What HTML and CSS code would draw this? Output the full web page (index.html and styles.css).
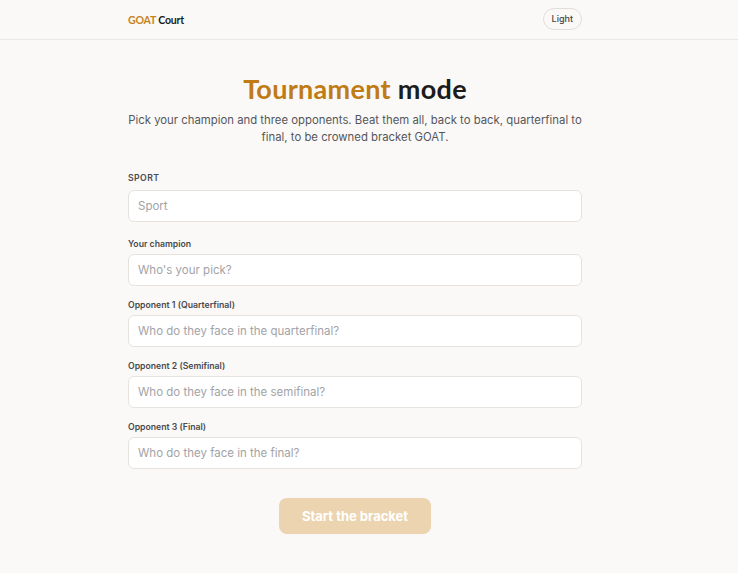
FILE: index.html
```html
<!DOCTYPE html>
<html lang="en">
<head>
    <meta charset="UTF-8">
    <meta name="viewport" content="width=device-width, initial-scale=1.0">
    <title>GOAT Court - Tournament mode</title>
    <link rel="stylesheet" href="styles.css">
</head>
<body>
    <header class="topbar">
        <div class="wrap topbar-inner">
            <a class="logo" href="#"><span class="logo-accent">GOAT</span> Court</a>
            <button class="theme-toggle" type="button">Light</button>
        </div>
    </header>

    <main class="wrap page">
        <h1 class="title"><span class="title-accent">Tournament</span> mode</h1>
        <p class="intro">Pick your champion and three opponents. Beat them all, back to back, quarterfinal to final, to be crowned bracket GOAT.</p>

        <form id="bracketForm" class="bracket-form">
            <div class="field field-sport">
                <label for="sport" class="caps">Sport</label>
                <input type="text" id="sport" placeholder="Sport">
            </div>
            <div class="field">
                <label for="champion">Your champion</label>
                <input type="text" id="champion" placeholder="Who's your pick?">
            </div>
            <div class="field">
                <label for="opp1">Opponent 1 (Quarterfinal)</label>
                <input type="text" id="opp1" placeholder="Who do they face in the quarterfinal?">
            </div>
            <div class="field">
                <label for="opp2">Opponent 2 (Semifinal)</label>
                <input type="text" id="opp2" placeholder="Who do they face in the semifinal?">
            </div>
            <div class="field">
                <label for="opp3">Opponent 3 (Final)</label>
                <input type="text" id="opp3" placeholder="Who do they face in the final?">
            </div>
            <div class="actions">
                <button type="submit" class="start-btn" disabled>Start the bracket</button>
            </div>
        </form>
    </main>
</body>
</html>
```

FILE: styles.css
```css
* {
    box-sizing: border-box;
}
body {
    margin: 0;
    font-family: Inter, "Noto Sans", sans-serif;
    background-color: #faf9f7;
    color: #1c1c1c;
}
.wrap {
    width: 454px;
    margin-left: 128px;
}
.topbar {
    height: 40px;
    border-bottom: 1px solid #ebe8e4;
}
.topbar-inner {
    height: 39px;
    display: flex;
    align-items: center;
    justify-content: space-between;
}
.logo {
    font-family: Lato, sans-serif;
    font-size: 10.6px;
    font-weight: 700;
    letter-spacing: -0.2px;
    color: #1c1c1c;
    text-decoration: none;
}
.logo-accent {
    color: #c4841f;
}
.theme-toggle {
    font-family: inherit;
    font-size: 9px;
    font-weight: 500;
    color: #444;
    background: transparent;
    border: 1px solid #e2dfda;
    border-radius: 12px;
    height: 22px;
    padding: 0 8px;
    margin-bottom: 2px;
}
.page {
    padding-top: 32px;
}
.title {
    margin: 0;
    text-align: center;
    font-family: Lato, sans-serif;
    font-size: 27px;
    font-weight: 700;
    line-height: 34px;
    letter-spacing: 0.3px;
}
.title-accent {
    color: #c07b14;
}
.intro {
    margin: 6px -10px 0;
    text-align: center;
    font-size: 11.35px;
    line-height: 17px;
    color: #56565a;
}
.bracket-form {
    margin-top: 27px;
}
.field {
    display: flex;
    flex-direction: column;
    gap: 4px;
    margin-bottom: 14px;
}
.field-sport {
    gap: 6px;
    margin-bottom: 17px;
}
.field label {
    font-size: 8.7px;
    font-weight: 600;
    line-height: 11px;
    color: #4a4a4e;
}
.field label.caps {
    text-transform: uppercase;
    letter-spacing: 0.4px;
}
.field input {
    width: 100%;
    height: 32px;
    padding: 0 9px;
    font-family: inherit;
    font-size: 11.5px;
    color: #222;
    background-color: white;
    border: 1px solid #e6e3de;
    border-radius: 6px;
    outline: none;
}
.field input::placeholder {
    color: #a3a3a6;
}
.actions {
    display: flex;
    justify-content: center;
    padding-top: 15px;
}
.start-btn {
    width: 152px;
    height: 36px;
    font-family: inherit;
    font-size: 13px;
    font-weight: 700;
    color: white;
    background-color: #ebd4af;
    border: none;
    border-radius: 8px;
}
```
